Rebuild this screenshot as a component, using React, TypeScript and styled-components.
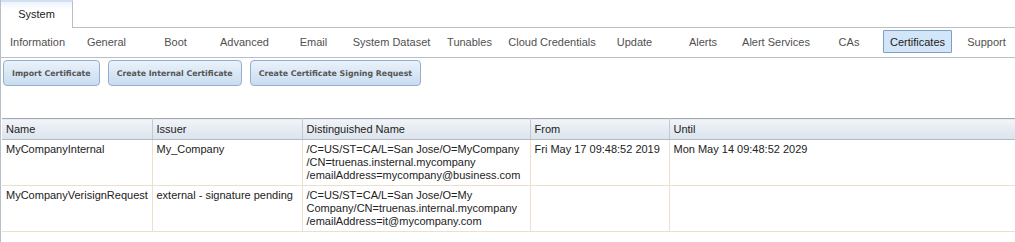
import styled, { createGlobalStyle } from 'styled-components';

const GlobalStyle = createGlobalStyle`
  body {
    margin: 0;
    background: #fff;
    font-family: 'Liberation Sans', Arial, sans-serif;
  }
`;

const Page = styled.div`
  width: 1015px;
  height: 242px;
  overflow: hidden;
  border-left: 1px solid #b7bfca;
  box-sizing: border-box;
`;

const TabBar = styled.div`
  display: flex;
  height: 28px;
`;

const MainTab = styled.div`
  width: 72px;
  box-sizing: border-box;
  border-right: 1px solid #b7bfca;
  border-top: 2px solid #cfe0f2;
  background: linear-gradient(#eef4fb, #fff 8px);
  display: flex;
  align-items: center;
  justify-content: center;
  padding-bottom: 2px;
  font-size: 11px;
  color: #222;
`;

const TabFiller = styled.div`
  flex: 1;
  border-bottom: 1px solid #b7bfca;
`;

const SubTabs = styled.div`
  display: flex;
  height: 30px;
  box-sizing: border-box;
  padding: 2px 0 0 2px;
  border-bottom: 1px solid #b7bfca;
`;

const SubTab = styled.div<{ $w: number; $active?: boolean }>`
  flex: none;
  width: ${({ $w }) => $w}px;
  height: 23px;
  box-sizing: border-box;
  display: flex;
  align-items: center;
  justify-content: center;
  white-space: nowrap;
  font-size: 11px;
  color: ${({ $active }) => ($active ? '#222' : '#505050')};
  background: ${({ $active }) => ($active ? '#d3e5f8' : 'transparent')};
  border: 1px solid ${({ $active }) => ($active ? '#7f9fc0' : 'transparent')};
  border-radius: 1px;
`;

const Toolbar = styled.div`
  display: flex;
  gap: 8px;
  padding: 2px 0 0 2px;
`;

const ActionButton = styled.div`
  height: 26px;
  padding: 0 8px;
  box-sizing: border-box;
  display: flex;
  align-items: center;
  border: 1px solid #93afcc;
  border-radius: 4px;
  background: linear-gradient(#eaf2fa, #c8dcf0);
  font-family: 'DejaVu Sans', Verdana, sans-serif;
  font-size: 7.85px;
  font-weight: bold;
  color: #555;
  white-space: nowrap;
`;

const Grid = styled.table`
  margin: 32px 0 0 1px;
  border-collapse: collapse;
  table-layout: fixed;
  width: 1020px;
  font-size: 11px;
  color: #222;
`;

const HeadCell = styled.th<{ $w?: number }>`
  width: ${({ $w }) => ($w ? `${$w}px` : 'auto')};
  height: 21px;
  padding: 0 4px;
  box-sizing: border-box;
  text-align: left;
  font-weight: normal;
  background: linear-gradient(#f1f4f8, #dbe3ec);
  border-top: 1px solid #a1a8b0;
  border-bottom: 1px solid #b3bac3;
  border-right: 1px solid #c3cad3;
`;

const Row = styled.tr`
  height: 46px;
  border-bottom: 1px solid #ecdfd0;
`;

const Cell = styled.td`
  vertical-align: top;
  padding: 3px 4px 0;
  line-height: 13px;
  border-right: 1px solid #ecdfd0;
  overflow: hidden;
`;

const tabs = [
  { label: 'Information', width: 69 },
  { label: 'General', width: 69 },
  { label: 'Boot', width: 69 },
  { label: 'Advanced', width: 69 },
  { label: 'Email', width: 69 },
  { label: 'System Dataset', width: 87 },
  { label: 'Tunables', width: 69 },
  { label: 'Cloud Credentials', width: 96 },
  { label: 'Update', width: 69 },
  { label: 'Alerts', width: 68 },
  { label: 'Alert Services', width: 78 },
  { label: 'CAs', width: 68 },
  { label: 'Certificates', width: 69 },
  { label: 'Support', width: 69 },
];

const columns = [
  { title: 'Name', width: 150 },
  { title: 'Issuer', width: 150 },
  { title: 'Distinguished Name', width: 228 },
  { title: 'From', width: 139 },
  { title: 'Until' },
];

const certs = [
  {
    name: 'MyCompanyInternal',
    issuer: 'My_Company',
    dn: [
      '/C=US/ST=CA/L=San Jose/O=MyCompany',
      '/CN=truenas.insternal.mycompany',
      '/emailAddress=mycompany@business.com',
    ],
    from: 'Fri May 17 09:48:52 2019',
    until: 'Mon May 14 09:48:52 2029',
  },
  {
    name: 'MyCompanyVerisignRequest',
    issuer: 'external - signature pending',
    dn: [
      '/C=US/ST=CA/L=San Jose/O=My',
      'Company/CN=truenas.internal.mycompany',
      '/emailAddress=it@mycompany.com',
    ],
    from: '',
    until: '',
  },
];

const App = () => {
  return (
    <Page>
      <GlobalStyle />
      <TabBar>
        <MainTab>System</MainTab>
        <TabFiller />
      </TabBar>
      <SubTabs>
        {tabs.map((t) => (
          <SubTab key={t.label} $w={t.width} $active={t.label === 'Certificates'}>
            {t.label}
          </SubTab>
        ))}
      </SubTabs>
      <Toolbar>
        <ActionButton>Import Certificate</ActionButton>
        <ActionButton>Create Internal Certificate</ActionButton>
        <ActionButton>Create Certificate Signing Request</ActionButton>
      </Toolbar>
      <Grid>
        <thead>
          <tr>
            {columns.map((c) => (
              <HeadCell key={c.title} $w={c.width}>
                {c.title}
              </HeadCell>
            ))}
          </tr>
        </thead>
        <tbody>
          {certs.map((c) => (
            <Row key={c.name}>
              <Cell>{c.name}</Cell>
              <Cell>{c.issuer}</Cell>
              <Cell>
                {c.dn.map((line) => (
                  <div key={line}>{line}</div>
                ))}
              </Cell>
              <Cell>{c.from}</Cell>
              <Cell>{c.until}</Cell>
            </Row>
          ))}
        </tbody>
      </Grid>
    </Page>
  );
};

export default App;
